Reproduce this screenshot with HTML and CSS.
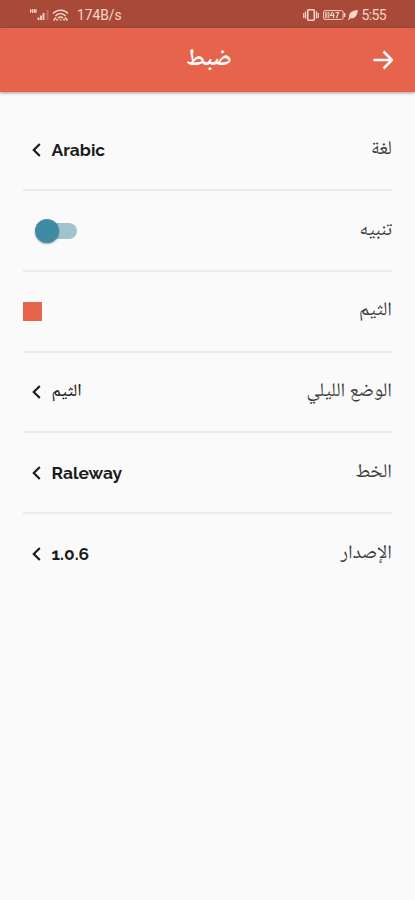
FILE: index.html
```
<!DOCTYPE html>
<html lang="ar" dir="rtl">
<head>
    <meta charset="utf-8">
    <title>ضبط</title>
    <link rel="stylesheet" href="styles.css">
</head>
<body>
    <div class="status-bar" dir="ltr">
        <div class="status-left">
            <svg class="signal" width="20" height="14" viewBox="0 0 20 14">
                <path d="M0.500 1v4M2.500 1v4M4.500 1v4M6 1v4M0.500 3h6" stroke-width="1"/>
                <path d="M8.500 12v-2.500M11 12v-4.500M13.500 12v-7" stroke-width="1.800"/>
                <path d="M17.500 12v-10" stroke-width="2" opacity="0.25"/>
            </svg>
            <svg class="wifi" width="17" height="14" viewBox="0 0 17 14">
                <path d="M1 5.500C5 1 12 1 16 5.500M3.500 8c3-3 7-3 10 0M6 10.200c1.500-1.500 3.500-1.500 5 0" stroke-width="1.500"/>
                <path d="M8.500 12.500v-1.500M1.500 12.500l2.500-3M4.500 12.500l1-1.500M15.500 12.500l-2.500-3M12.500 12.500l-1-1.500" stroke-width="1.500"/>
            </svg>
            <span class="speed">174B/s</span>
        </div>
        <div class="status-right">
            <svg class="vibrate" width="16" height="14" viewBox="0 0 16 14">
                <rect x="4.700" y="1.700" width="6.600" height="10.600" rx="1" stroke-width="1.600"/>
                <path d="M2.500 3.500v7M13.500 3.500v7M0.700 5v5M15.300 5v5" stroke-width="1.200"/>
            </svg>
            <svg class="battery" width="23" height="12" viewBox="0 0 23 12">
                <rect x="0.600" y="1.600" width="19.500" height="8.800" rx="1.500" stroke-width="1"/>
                <path d="M21.700 4v4" stroke-width="1.400"/>
                <path d="M3 3v6M5.500 3v6" stroke-width="2" opacity="0.7"/>
                <path d="M9.500 3l-2 3.500h4M10.500 4v5M12.500 3.500h3l-2 5.500" stroke-width="1.200"/>
            </svg>
            <svg class="leaf" width="10" height="10" viewBox="0 0 10 10">
                <path class="solid" d="M9.800 0C4 0.500 0 3 1.200 8C6.500 9.500 9.500 6 9.800 0z"/>
                <path d="M0.300 9.700l3-3.500" stroke-width="1.200"/>
            </svg>
            <span class="clock">5:55</span>
        </div>
    </div>

    <header class="app-bar">
        <svg class="back" width="20" height="20" viewBox="0 0 20 20">
            <path d="M0.500 10h18M10.500 1.500L19 10l-8.500 8.500"/>
        </svg>
        <h1>ضبط</h1>
    </header>

    <main class="settings">
        <div class="row">
            <span class="label">لغة</span>
            <div class="value">
                <span class="latin">Arabic</span>
                <svg class="chevron" width="9" height="14" viewBox="0 0 9 14"><path d="M7.800 1L1.800 7l6 6"/></svg>
            </div>
        </div>
        <div class="row">
            <span class="label">تنبيه</span>
            <div class="switch"><div class="thumb"></div></div>
        </div>
        <div class="row">
            <span class="label">الثيم</span>
            <div class="swatch"></div>
        </div>
        <div class="row">
            <span class="label">الوضع الليلي</span>
            <div class="value">
                <span class="arabic">الثيم</span>
                <svg class="chevron" width="9" height="14" viewBox="0 0 9 14"><path d="M7.800 1L1.800 7l6 6"/></svg>
            </div>
        </div>
        <div class="row">
            <span class="label">الخط</span>
            <div class="value">
                <span class="latin">Raleway</span>
                <svg class="chevron" width="9" height="14" viewBox="0 0 9 14"><path d="M7.800 1L1.800 7l6 6"/></svg>
            </div>
        </div>
        <div class="row">
            <span class="label">الإصدار</span>
            <div class="value">
                <span class="latin">1.0.6</span>
                <svg class="chevron" width="9" height="14" viewBox="0 0 9 14"><path d="M7.800 1L1.800 7l6 6"/></svg>
            </div>
        </div>
    </main>
</body>
</html>
```
FILE: styles.css
```
* {
    box-sizing: border-box;
}
body {
    margin: 0;
    min-height: 100vh;
    background-color: #fafafa;
    color: #202020;
    font-family: "Noto Naskh Arabic UI", "Noto Naskh Arabic", "Noto Sans Arabic", "DejaVu Sans", sans-serif;
}
svg {
    display: block;
    flex: none;
    fill: none;
    stroke: currentColor;
}
.status-bar {
    height: 28px;
    padding: 2px 29px 0 30px;
    display: flex;
    justify-content: space-between;
    align-items: center;
    background-color: #a94a39;
    color: #f6d6cd;
    font-family: Roboto, sans-serif;
}
.status-left,
.status-right {
    display: flex;
    align-items: center;
}
.wifi {
    margin-left: 2px;
}
.speed {
    margin-left: 8px;
    font-size: 13.8px;
}
.battery {
    margin-left: 4px;
}
.leaf {
    margin-left: 2px;
}
.leaf .solid {
    fill: currentColor;
    stroke: none;
}
.clock {
    margin-left: 3px;
    font-size: 14px;
    letter-spacing: -0.6px;
}
.app-bar {
    height: 64px;
    padding: 0 22px;
    display: grid;
    grid-template-columns: 20px 1fr 20px;
    align-items: center;
    background-color: #e6634c;
    color: #fff;
    box-shadow: 0 1px 3px rgba(0, 0, 0, 0.4);
}
.app-bar h1 {
    margin: 0;
    padding: 0 0 3px 3px;
    font-size: 23.5px;
    font-weight: 700;
    line-height: 30px;
    text-align: center;
}
.back {
    stroke-width: 2.5;
}
.settings {
    padding: 18.5px 23px 0 23px;
}
.row {
    height: 80.7px;
    display: flex;
    justify-content: space-between;
    align-items: center;
    border-bottom: 2px solid #ebebeb;
}
.row:last-child {
    border-bottom: none;
}
.label {
    padding-bottom: 1px;
    color: #3c3c3c;
    font-size: 19.5px;
}
.value {
    padding-left: 9px;
    display: flex;
    align-items: center;
    gap: 10.5px;
    color: #1c1c1c;
}
.latin {
    font-family: Raleway, Lato, sans-serif;
    font-size: 17.4px;
    font-weight: bold;
}
.arabic {
    font-size: 17.5px;
    font-weight: 500;
    padding-bottom: 2px;
}
.chevron {
    stroke-width: 2.2;
}
.switch {
    width: 36px;
    height: 16px;
    margin-left: 18px;
    display: flex;
    align-items: center;
    justify-content: flex-end;
    border-radius: 8px;
    background-color: #a0c4ce;
}
.thumb {
    width: 24px;
    height: 24px;
    flex: none;
    margin-left: -6px;
    border-radius: 50%;
    background-color: #3f8ba3;
    box-shadow: 0 1px 2px rgba(0, 0, 0, 0.35);
}
.swatch {
    width: 19px;
    height: 19px;
    background-color: #e6634c;
}
```
